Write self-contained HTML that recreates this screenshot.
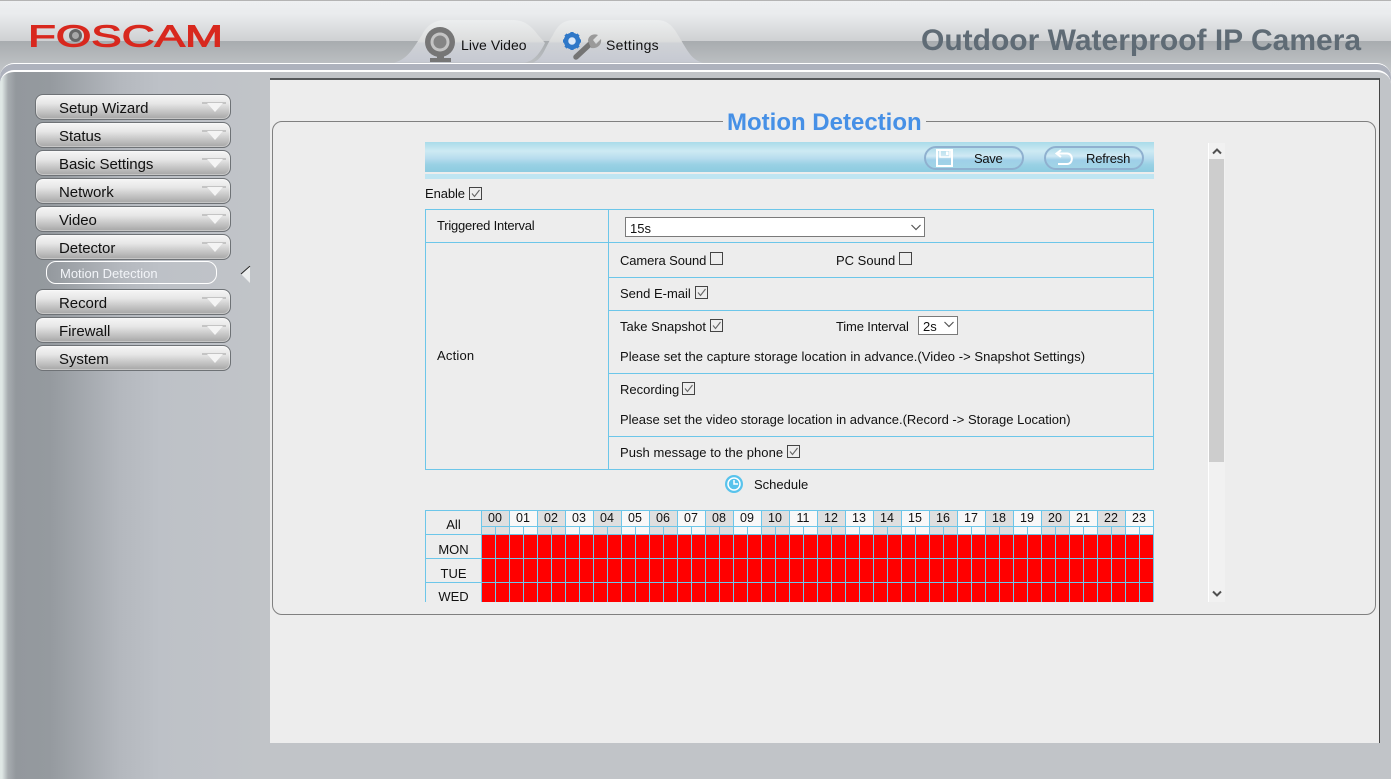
<!DOCTYPE html>
<html><head><meta charset="utf-8"><title>Motion Detection</title>
<style>
html,body{margin:0;padding:0}
body{width:1391px;height:779px;overflow:hidden;position:relative;font-family:"Liberation Sans",Arial,sans-serif;color:#000;background:#c1c4c8}
div,span,svg{position:absolute}
.t{position:absolute;white-space:nowrap;line-height:16px;font-size:13px;color:#111}
.btn{left:35px;width:194px;height:24px;border:1px solid #6e7276;border-radius:8px;background:linear-gradient(#f6f6f6 0,#e6e6e6 35%,#c4c4c4 70%,#a6a6a6 100%);box-shadow:inset 0 0 0 1px rgba(255,255,255,.35)}
.btn b{position:absolute;left:23px;top:5px;font-weight:normal;font-size:15px;line-height:17px;letter-spacing:-.05px;color:#111;white-space:nowrap}
.btn i{position:absolute;left:171px;top:8px;width:0;height:0;border-left:8px solid transparent;border-right:8px solid transparent;border-top:9px solid #f4f4f4}
.btn u{position:absolute;left:166px;top:7px;width:24px;height:2px;background:#c4c4c4}
.h{background:#6cc6e9;position:absolute}
.c{position:absolute;width:11px;height:11px;border:1px solid #444;background:#ededed}
.c svg{left:0;top:0}
.hr{position:absolute;left:481px;width:673px;display:flex}
.hr span{position:static;width:28px;text-align:center;font-size:12.5px;line-height:16px;color:#111}
.d{position:absolute;left:426px;width:55px;text-align:center;font-size:13px;line-height:16px;color:#111}
</style></head><body>

<!-- header -->
<div style="left:0;top:0;width:1391px;height:41px;background:linear-gradient(#eef0f2 0,#e9ebed 35%,#cfd1d3 100%);border-top:1px solid #b4b4b4;box-sizing:border-box"></div>
<div style="left:0;top:41px;width:1391px;height:30px;background:linear-gradient(#a8acaf,#c2c5c8)"></div>

<!-- logo -->
<svg style="left:20px;top:15px" width="215" height="40">
<text x="8" y="31.500" font-family="Liberation Sans" font-size="31" fill="#d8281e" stroke="#d8281e" stroke-width="1" textLength="195" lengthAdjust="spacingAndGlyphs">FOSCAM</text>
<circle cx="55.500" cy="20.500" r="6.500" fill="#666"/><circle cx="55.500" cy="20.500" r="3.500" fill="#a8a8a8"/>
</svg>

<div class="t" style="left:921px;top:24px;font-size:30px;line-height:34px;font-weight:bold;color:#5f6b75">Outdoor Waterproof IP Camera</div>

<!-- band -->
<div style="left:0;top:63px;width:1391px;height:30px;box-sizing:border-box;border-top:1px solid #fff;border-radius:14px 14px 0 0;background:#aeb2bd"></div>
<div style="left:0;top:70px;width:1391px;height:709px;box-sizing:border-box;border-top:2px solid #fff;border-radius:14px 14px 0 0;background:linear-gradient(90deg,#dfe7e5 0,#dfe7e5 2px,#a7acb0 8px,#93989d 16px,#959a9f 50px,#b4b8be 120px,#bdc1c7 160px,#c1c4c8 260px)"></div>

<!-- tabs -->
<svg style="left:385px;top:15px" width="330" height="50">
<defs><linearGradient id="tg" x1="0" y1="0" x2="0" y2="1"><stop offset="0" stop-color="#eceeef"/><stop offset=".5" stop-color="#dcdddd"/><stop offset=".55" stop-color="#cfd2d6"/><stop offset="1" stop-color="#c6c9d2"/></linearGradient></defs>
<path d="M9 47.500C23 45 30 30 37 20C42 10 50 5 60 5H128C140 5 147 12 153 20L160 28C156 36 150 46 140 47.500Z" fill="url(#tg)"/>
<path d="M148 47.500C158 44 160 32 168 20C173 10 178 5 190 5H272C285 5 290 15 296 25C303 37 308 46 318 47.500Z" fill="url(#tg)"/>
<!-- webcam -->
<circle cx="55" cy="27" r="15" fill="#767676"/>
<circle cx="55" cy="27" r="9.500" fill="#c4c4c4"/>
<circle cx="55" cy="27" r="6.500" fill="#858585"/>
<path d="M52 41H59V43H52Z" fill="#767676"/><path d="M45 43H66V47H45Z" fill="#767676"/>
<!-- gear -->
<circle cx="187" cy="26" r="6" fill="#dce9f8" stroke="#2f78c8" stroke-width="4.500"/>
<path d="M187 17v3M187 32v3M178 26h3M193 26h3M180.500 19.500l2 2M193.500 32.500l-2-2M193.500 19.500l-2 2M180.500 32.500l2-2" stroke="#2f78c8" stroke-width="3.200"/>
<!-- wrench -->
<path d="M191 42L205 29" stroke="#747474" stroke-width="5.500" stroke-linecap="round"/>
<path d="M203 26C203 21 208 18 213 20L208 25L211 29L216 24C217 30 212 34 206 33Z" fill="#9a9a9a"/>
</svg>
<div class="t" style="left:461px;top:37px;font-size:14px;letter-spacing:.05px">Live Video</div>
<div class="t" style="left:606px;top:37px;font-size:14px;letter-spacing:.3px">Settings</div>

<!-- sidebar -->
<div class="btn" style="top:94px"><b>Setup Wizard</b><u></u><i></i></div>
<div class="btn" style="top:122px"><b>Status</b><u></u><i></i></div>
<div class="btn" style="top:150px"><b>Basic Settings</b><u></u><i></i></div>
<div class="btn" style="top:178px"><b>Network</b><u></u><i></i></div>
<div class="btn" style="top:206px"><b>Video</b><u></u><i></i></div>
<div class="btn" style="top:234px"><b>Detector</b><u></u><i></i></div>
<div style="left:46px;top:261px;width:169px;height:21px;border:1px solid #fff;border-radius:10px"></div>
<div class="t" style="left:60px;top:266px;font-size:13px;color:#f2f4f8">Motion Detection</div>
<svg style="left:240px;top:264px" width="12" height="20"><path d="M10 1V19L1 10Z" fill="#eceeee"/><path d="M1 10L10 2" stroke="#222" stroke-width="1"/></svg>
<div class="btn" style="top:289px"><b>Record</b><u></u><i></i></div>
<div class="btn" style="top:317px"><b>Firewall</b><u></u><i></i></div>
<div class="btn" style="top:345px"><b>System</b><u></u><i></i></div>

<!-- content panel -->
<div style="left:270px;top:78px;width:1110px;height:665px;box-sizing:border-box;background:#ededed;border-top:2px solid #55585a;border-right:1px solid #444"></div>
<div style="left:272px;top:121px;width:1102px;height:492px;border:1px solid #808080;border-radius:10px"></div>
<div style="left:723px;top:105px;width:203px;height:32px;background:#ededed"></div>
<div class="t" style="left:727px;top:109px;font-size:24px;line-height:28px;font-weight:bold;color:#4690e6">Motion Detection</div>

<!-- toolbar -->
<div style="left:425px;top:142px;width:729px;height:30px;background:linear-gradient(#a9dbe9 0,#cdeaf3 30%,#b7dcee 55%,#99d1e4 75%,#8dcbe0 100%)"></div>
<div style="left:425px;top:174px;width:729px;height:5px;background:#bfe5f2"></div>
<div style="left:924px;top:146px;width:96px;height:20px;border:2px solid #8fb0cf;border-radius:12px;background:linear-gradient(#b0dcea,#d0e9f4 40%,#9fcfe8 60%,#a0d4e6)"></div>
<div style="left:1044px;top:146px;width:96px;height:20px;border:2px solid #8fb0cf;border-radius:12px;background:linear-gradient(#b0dcea,#d0e9f4 40%,#9fcfe8 60%,#a0d4e6)"></div>
<svg style="left:936px;top:149px" width="18" height="18"><path d="M1 1H16V17H1Z" fill="none" stroke="#fff" stroke-width="2"/><path d="M4 1H14V8H4Z" fill="none" stroke="#fff" stroke-width="1.500"/><path d="M10 2.500H12.500V6H10Z" fill="#fff"/></svg>
<svg style="left:1053px;top:149px" width="22" height="18"><path d="M4 4.500H14C20.500 4.500 20.500 15 14 15H5" fill="none" stroke="#fff" stroke-width="2"/><path d="M8 1L3.500 4.500L8 8" fill="none" stroke="#fff" stroke-width="2"/></svg>
<div class="t" style="left:974px;top:151px;letter-spacing:-.3px">Save</div>
<div class="t" style="left:1086px;top:151px;letter-spacing:-.2px">Refresh</div>

<!-- enable -->
<div class="t" style="left:425px;top:186px;letter-spacing:-.1px">Enable</div>
<div class="c" style="left:469px;top:187px"><svg width="11" height="11"><path d="M2 5.500L4.500 8.500L9.500 2" fill="none" stroke="#666" stroke-width="1.100"/></svg></div>

<!-- form table lines -->
<div class="h" style="left:425px;top:209px;width:729px;height:1px"></div>
<div class="h" style="left:425px;top:242px;width:729px;height:1px"></div>
<div class="h" style="left:608px;top:277px;width:546px;height:1px"></div>
<div class="h" style="left:608px;top:310px;width:546px;height:1px"></div>
<div class="h" style="left:608px;top:373px;width:546px;height:1px"></div>
<div class="h" style="left:608px;top:436px;width:546px;height:1px"></div>
<div class="h" style="left:425px;top:469px;width:729px;height:1px"></div>
<div class="h" style="left:425px;top:209px;width:1px;height:261px"></div>
<div class="h" style="left:608px;top:209px;width:1px;height:261px"></div>
<div class="h" style="left:1153px;top:209px;width:1px;height:261px"></div>

<div class="t" style="left:437px;top:218px;letter-spacing:-.22px">Triggered Interval</div>
<div style="left:625px;top:217px;width:298px;height:18px;border:1px solid #7a7a7a;background:#fff"></div>
<div class="t" style="left:630px;top:221px">15s</div>
<svg style="left:910px;top:223px" width="12" height="9"><path d="M1.500 2L6 6.500L10.500 2" fill="none" stroke="#555" stroke-width="1.200"/></svg>

<div class="t" style="left:437px;top:348px;letter-spacing:.2px">Action</div>

<div class="t" style="left:620px;top:253px;letter-spacing:-.1px">Camera Sound</div>
<div class="c" style="left:710px;top:252px"></div>
<div class="t" style="left:836px;top:253px">PC Sound</div>
<div class="c" style="left:899px;top:252px"></div>

<div class="t" style="left:620px;top:286px">Send E-mail</div>
<div class="c" style="left:695px;top:286px"><svg width="11" height="11"><path d="M2 5.500L4.500 8.500L9.500 2" fill="none" stroke="#666" stroke-width="1.100"/></svg></div>

<div class="t" style="left:620px;top:319px">Take Snapshot</div>
<div class="c" style="left:710px;top:319px"><svg width="11" height="11"><path d="M2 5.500L4.500 8.500L9.500 2" fill="none" stroke="#666" stroke-width="1.100"/></svg></div>
<div class="t" style="left:836px;top:319px;letter-spacing:-.15px">Time Interval</div>
<div style="left:918px;top:316px;width:38px;height:17px;border:1px solid #7a7a7a;background:#fff"></div>
<div class="t" style="left:923px;top:319px">2s</div>
<svg style="left:943px;top:320px" width="12" height="9"><path d="M1.500 2L6 6.500L10.500 2" fill="none" stroke="#555" stroke-width="1.200"/></svg>
<div class="t" style="left:620px;top:349px;letter-spacing:.05px">Please set the capture storage location in advance.(Video -&gt; Snapshot Settings)</div>

<div class="t" style="left:620px;top:382px">Recording</div>
<div class="c" style="left:682px;top:382px"><svg width="11" height="11"><path d="M2 5.500L4.500 8.500L9.500 2" fill="none" stroke="#666" stroke-width="1.100"/></svg></div>
<div class="t" style="left:620px;top:412px">Please set the video storage location in advance.(Record -&gt; Storage Location)</div>

<div class="t" style="left:620px;top:445px;letter-spacing:.05px">Push message to the phone</div>
<div class="c" style="left:787px;top:445px"><svg width="11" height="11"><path d="M2 5.500L4.500 8.500L9.500 2" fill="none" stroke="#666" stroke-width="1.100"/></svg></div>

<!-- schedule title -->
<svg style="left:724px;top:474px" width="20" height="20"><circle cx="10" cy="10" r="9" fill="#58c3ec"/><circle cx="10" cy="10" r="6" fill="none" stroke="#fff" stroke-width="1.500"/><path d="M10 6V10H14" fill="none" stroke="#fff" stroke-width="1.500"/></svg>
<div class="t" style="left:754px;top:477px">Schedule</div>

<!-- schedule grid -->
<div style="left:425px;top:510px;width:729px;height:92px;overflow:hidden">
 <div style="left:56px;top:0;width:673px;height:17px;background:repeating-linear-gradient(90deg,#6cc6e9 0 1px,#dfdfdf 1px 28px,#6cc6e9 28px 29px,#f8f8f8 29px 56px)"></div>
 <div style="left:56px;top:16px;width:673px;height:8px;background:repeating-linear-gradient(90deg,#6cc6e9 0 1px,#dfdfdf 1px 14px,#6cc6e9 14px 15px,#dfdfdf 15px 28px,#6cc6e9 28px 29px,#f8f8f8 29px 42px,#6cc6e9 42px 43px,#f8f8f8 43px 56px)"></div>
 <div style="left:56px;top:24px;width:673px;height:68px;background:repeating-linear-gradient(90deg,#6cc6e9 0 1px,#f00 1px 14px)"></div>
 <div style="left:0;top:0;width:729px;height:1px;background:#6cc6e9"></div>
 <div style="left:56px;top:16px;width:673px;height:1px;background:#6cc6e9"></div>
 <div style="left:0;top:24px;width:729px;height:1px;background:#6cc6e9"></div>
 <div style="left:0;top:48px;width:729px;height:1px;background:#6cc6e9"></div>
 <div style="left:0;top:72px;width:729px;height:1px;background:#6cc6e9"></div>
 <div style="left:0;top:0;width:1px;height:92px;background:#6cc6e9"></div>
 <div style="left:728px;top:0;width:1px;height:24px;background:#6cc6e9"></div>
</div>
<div class="hr" style="top:510px"><span>00</span><span>01</span><span>02</span><span>03</span><span>04</span><span>05</span><span>06</span><span>07</span><span>08</span><span>09</span><span>10</span><span>11</span><span>12</span><span>13</span><span>14</span><span>15</span><span>16</span><span>17</span><span>18</span><span>19</span><span>20</span><span>21</span><span>22</span><span>23</span></div>
<div class="d" style="top:517px">All</div>
<div class="d" style="top:542px">MON</div>
<div class="d" style="top:566px">TUE</div>
<div class="d" style="top:589px">WED</div>

<!-- scrollbar -->
<div style="left:1208px;top:143px;width:17px;height:459px;background:#f1f1f1;border-left:1px solid #fff;box-sizing:border-box"></div>
<div style="left:1209px;top:159px;width:15px;height:303px;background:#cdcdcd"></div>
<svg style="left:1211px;top:147px" width="12" height="9"><path d="M2 6.500L6 2.500L10 6.500" fill="none" stroke="#505050" stroke-width="2"/></svg>
<svg style="left:1211px;top:589px" width="12" height="9"><path d="M2 2.500L6 6.500L10 2.500" fill="none" stroke="#505050" stroke-width="2"/></svg>
</body></html>
